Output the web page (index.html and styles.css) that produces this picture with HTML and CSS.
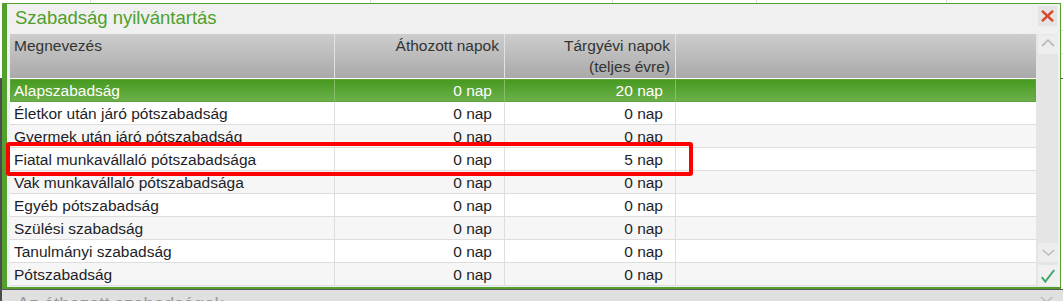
FILE: index.html
```html
<!DOCTYPE html>
<html lang="hu">
<head>
<meta charset="utf-8">
<title>Szabadság nyilvántartás</title>
<link rel="stylesheet" href="styles.css">
</head>
<body>
<div class="screen">
  <div class="topstrip">
    <span class="tc" style="width:91px"></span>
    <span class="tc" style="width:280px"></span>
    <span class="tc" style="width:242px"></span>
    <span class="tc" style="width:144px"></span>
    <span class="tc" style="width:190px"></span>
  </div>
  <div class="mid">
    <div class="leftstrip"></div>
    <div class="dialog">
      <div class="titlebar">
        <div class="title">Szabadság nyilvántartás</div>
        <div class="closebtn">
          <svg width="13" height="12" viewBox="0 0 13 12"><path d="M1 0.8L12 11.2M12 0.8L1 11.2" stroke="#d9472b" stroke-width="2.4" fill="none"/></svg>
        </div>
      </div>
      <div class="dbody">
        <div class="grid">
          <div class="hc">Megnevezés</div>
          <div class="hc r">Áthozott napok</div>
          <div class="hc r">Tárgyévi napok<br>(teljes évre)</div>
          <div class="hc last"></div>

          <div class="c sel">Alapszabadság</div>
          <div class="c sel r">0 nap</div>
          <div class="c sel r">20 nap</div>
          <div class="c sel last"></div>

          <div class="c">Életkor után járó pótszabadság</div>
          <div class="c r">0 nap</div>
          <div class="c r">0 nap</div>
          <div class="c last"></div>

          <div class="c alt">Gyermek után járó pótszabadság</div>
          <div class="c alt r">0 nap</div>
          <div class="c alt r">0 nap</div>
          <div class="c alt last"></div>

          <div class="c">Fiatal munkavállaló pótszabadsága</div>
          <div class="c r">0 nap</div>
          <div class="c r">5 nap</div>
          <div class="c last"></div>

          <div class="c alt">Vak munkavállaló pótszabadsága</div>
          <div class="c alt r">0 nap</div>
          <div class="c alt r">0 nap</div>
          <div class="c alt last"></div>

          <div class="c">Egyéb pótszabadság</div>
          <div class="c r">0 nap</div>
          <div class="c r">0 nap</div>
          <div class="c last"></div>

          <div class="c alt">Szülési szabadság</div>
          <div class="c alt r">0 nap</div>
          <div class="c alt r">0 nap</div>
          <div class="c alt last"></div>

          <div class="c">Tanulmányi szabadság</div>
          <div class="c r">0 nap</div>
          <div class="c r">0 nap</div>
          <div class="c last"></div>

          <div class="c alt">Pótszabadság</div>
          <div class="c alt r">0 nap</div>
          <div class="c alt r">0 nap</div>
          <div class="c alt last"></div>
        </div>
        <div class="scrollcol">
          <div class="sbtn up">
            <svg width="14" height="8" viewBox="0 0 14 8"><path d="M1 7L7 1.2L13 7" stroke="#bdbdbd" stroke-width="1.8" fill="none"/></svg>
          </div>
          <div class="track"></div>
          <div class="sbtn down">
            <svg width="13" height="7" viewBox="0 0 13 7"><path d="M0.8 1L6.5 6L12.2 1" stroke="#bdbdbd" stroke-width="1.6" fill="none"/></svg>
          </div>
          <div class="sbtn ok">
            <svg width="14" height="14" viewBox="0 0 14 14"><path d="M0.8 8.2L4.3 12.6L13.2 1" stroke="#3ea86c" stroke-width="2" fill="none"/></svg>
          </div>
        </div>
      </div>
    </div>
    <div class="rightstrip"></div>
  </div>
  <div class="bottombar">
    <div class="btitle">Az áthozott szabadságok</div>
    <svg class="bchev" width="13" height="7" viewBox="0 0 13 7"><path d="M0.8 1L6.5 6L12.2 1" stroke="#bdbdbd" stroke-width="1.6" fill="none"/></svg>
  </div>
  <div class="highlight"></div>
</div>
</body>
</html>
```
FILE: styles.css
```css
* { box-sizing: border-box; }
html, body { margin: 0; padding: 0; }
body { background: #ffffff; font-family: "Liberation Sans", Arial, sans-serif; }

.screen {
  position: relative;
  width: 1063px;
  height: 301px;
  overflow: hidden;
  display: flex;
  flex-direction: column;
  background: #ffffff;
}

.topstrip {
  height: 3px;
  display: flex;
  flex: none;
}
.tc { display: block; height: 3px; border-right: 1px solid #dcdcdc; }

.mid {
  display: flex;
  height: 286px;
  flex: none;
}
.leftstrip {
  width: 2px;
  background: linear-gradient(#ffffff 0 75px, #4c4c4c 75px);
}
.rightstrip {
  width: 2px;
  background:
    linear-gradient(transparent 0 27px, #dcdcdc 27px 28px, transparent 28px 50px, #dcdcdc 50px 51px, transparent 51px 75px, #555 75px 76px, transparent 76px),
    #ffffff;
}

.dialog {
  width: 1059px;
  height: 286px;
  border: 1px solid #52a02e;
  border-left-width: 5px;
  border-bottom-width: 2px;
  background: #f0f0f0;
  display: flex;
  flex-direction: column;
}

.titlebar {
  height: 30px;
  display: flex;
  justify-content: space-between;
  align-items: flex-start;
  flex: none;
}
.title {
  font-size: 18.5px;
  line-height: 27px;
  color: #4f9f2c;
  padding-left: 8px;
}
.closebtn {
  width: 19px;
  height: 20px;
  margin-top: 2px;
  margin-right: 3px;
  background: #e4e4e4;
  display: flex;
  align-items: center;
  justify-content: center;
}

.dbody {
  display: flex;
  padding-left: 3px;
  flex: 1;
}

.grid {
  width: 1026px;
  display: grid;
  grid-template-columns: 325px 170px 171px 360px;
  grid-auto-rows: 23px;
  grid-template-rows: 45px;
  align-content: start;
  font-size: 15.5px;
}

.hc {
  height: 45px;
  padding: 1px 5px 0 4px;
  line-height: 21px;
  color: #333333;
  background: linear-gradient(#cdcdcd, #a9a9a9);
  border-right: 1px solid #e2e2e2;
  border-bottom: 1px solid #ffffff;
  white-space: nowrap;
}
.hc.last { border-right: none; }

.c {
  height: 23px;
  padding: 2px 12px 0 4px;
  line-height: 20px;
  color: #1e1e28;
  background: #ffffff;
  border-right: 1px solid #dddddd;
  border-bottom: 1px solid #dddddd;
  white-space: nowrap;
}
.c.alt { background: #f6f6f6; }
.c.last { border-right: none; }
.r { text-align: right; }

.c.sel {
  color: #ffffff;
  background: linear-gradient(#479a1f, #6cb04b);
  border-top: 1px solid #5ea23a;
  border-bottom: 1px solid #5ea23a;
  border-right: 1px solid #86bd68;
  padding-top: 1px;
}
.c.sel:first-child, .grid .c.sel:nth-child(5) { border-left: 1px solid #5ea23a; padding-left: 3px; }
.c.sel.last { border-right: 1px solid #5ea23a; }

.scrollcol {
  width: 22px;
  background: #e5e5e5;
  display: flex;
  flex-direction: column;
  align-items: flex-end;
  padding-bottom: 1px;
}
.sbtn {
  width: 20px;
  display: flex;
  align-items: center;
  justify-content: center;
  background: #ededed;
}
.sbtn.up { height: 19px; margin-top: 1px; padding-bottom: 3px; }
.track { flex: 1; }
.sbtn.down { height: 19px; }
.sbtn.ok { height: 21px; margin-top: 3px; background: #f0f0f0; }

.bottombar {
  flex: 1;
  background: linear-gradient(90deg, #4c4c4c 0 2px, #e0e0e0 2px);
  border-top: 1px solid #5a5a5a;
  position: relative;
  display: flex;
  justify-content: space-between;
}
.btitle {
  font-size: 18.5px;
  color: #9a9a9a;
  padding-left: 17px;
  line-height: 20px;
  margin-top: 4px;
  white-space: nowrap;
}
.bchev { margin-top: 6px; margin-right: 10px; }

.highlight {
  position: absolute;
  left: 6px;
  top: 142px;
  width: 687px;
  height: 34px;
  border: 4px solid #ff0000;
  border-radius: 3px;
}
```
